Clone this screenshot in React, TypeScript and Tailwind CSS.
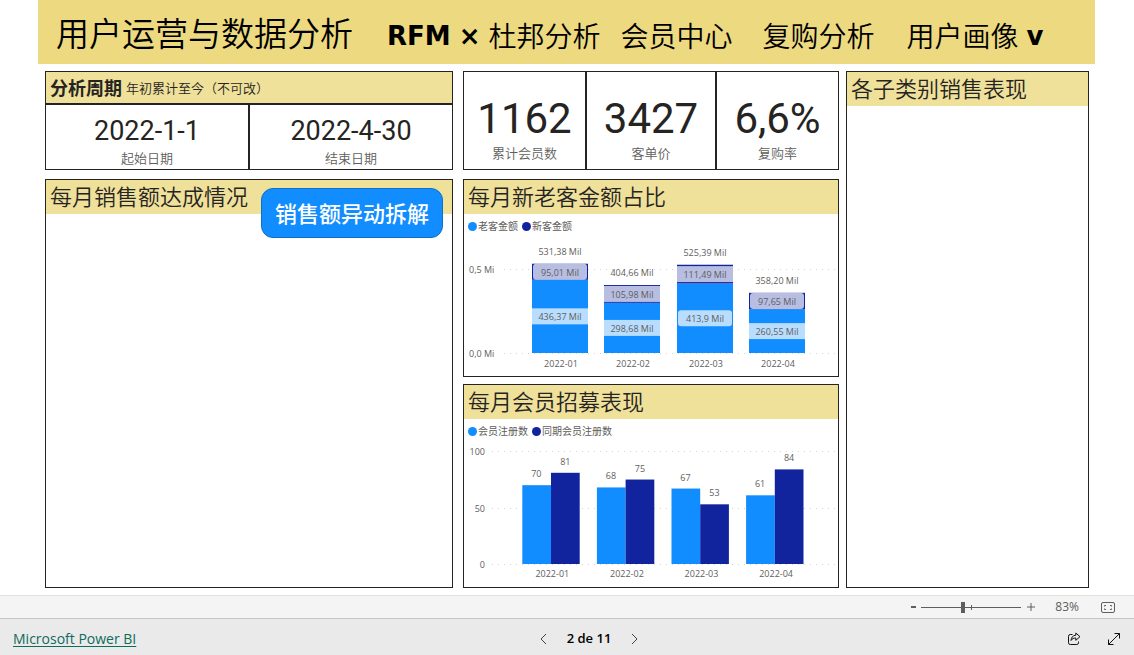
import type { ReactNode } from 'react'

/**
 * Embedded sales / membership report: a khaki banner with the page links,
 * three columns of cards, then the zoom strip and the pager bar.
 */

const BLUE = '#118dff'
const NAVY = '#12239e'

interface MonthSales {
  month: string
  old: number
  oldLabel: string
  fresh: number
  freshLabel: string
  total: string
}

const sales: MonthSales[] = [
  { month: '2022-01', old: 436.37, oldLabel: '436,37 Mil', fresh: 95.01, freshLabel: '95,01 Mil', total: '531,38 Mil' },
  { month: '2022-02', old: 298.68, oldLabel: '298,68 Mil', fresh: 105.98, freshLabel: '105,98 Mil', total: '404,66 Mil' },
  { month: '2022-03', old: 413.9, oldLabel: '413,9 Mil', fresh: 111.49, freshLabel: '111,49 Mil', total: '525,39 Mil' },
  { month: '2022-04', old: 260.55, oldLabel: '260,55 Mil', fresh: 97.65, freshLabel: '97,65 Mil', total: '358,20 Mil' },
]

const signups = [
  { month: '2022-01', current: 70, previous: 81 },
  { month: '2022-02', current: 68, previous: 75 },
  { month: '2022-03', current: 67, previous: 53 },
  { month: '2022-04', current: 61, previous: 84 },
]

const kpis = [
  { value: '1162', label: '累计会员数' },
  { value: '3427', label: '客单价' },
  { value: '6,6%', label: '复购率' },
]

function Panel({ title, className = '', children }: { title: string; className?: string; children?: ReactNode }) {
  return (
    <section className={`border border-[#252423] bg-white ${className}`}>
      <h2 className="h-[34px] bg-[#efe09a] pl-1 text-[22px] leading-8 font-[350] whitespace-nowrap">{title}</h2>
      {children}
    </section>
  )
}

function Legend({ items }: { items: [string, string] }) {
  return (
    <ul className="flex h-[23px] items-center gap-1 pt-0.5 pl-1 text-[10px] text-[#605e5c]">
      <li className="flex items-center gap-px">
        <span className="size-[9px] rounded-full bg-[#118dff]" />
        {items[0]}
      </li>
      <li className="flex items-center gap-px">
        <span className="size-[9px] rounded-full bg-[#12239e]" />
        {items[1]}
      </li>
    </ul>
  )
}

function GridLine({ x, y }: { x: number; y: number }) {
  return <line x1={x} x2={372} y1={y} y2={y} stroke="#d6d4d2" strokeDasharray="1 5" />
}

function BarLabel({ x, mid, text }: { x: number; mid: number; text: string }) {
  // short captions leave a sliver of the bar visible on each side
  const width = text.length < 10 ? 54 : 56
  return (
    <g>
      <rect x={x + (56 - width) / 2} y={mid - 8} width={width} height={16} rx={width < 56 ? 3 : 0} fill="#fff" fillOpacity={0.7} />
      <text x={x + 28} y={mid + 4} textAnchor="middle">{text}</text>
    </g>
  )
}

function SalesChart() {
  const base = 116
  const scale = 0.168
  return (
    <svg viewBox="0 0 374 139" className="block w-full" fontSize={9} fill="#605e5c">
      <text x={5} y={36}>0,5 Mi</text>
      <text x={5} y={120}>0,0 Mi</text>
      <GridLine x={40} y={32.5} />
      <GridLine x={40} y={116.5} />
      {sales.map((s, i) => {
        const x = Math.round(68 + i * 72.3)
        const split = base - s.old * scale
        const top = split - s.fresh * scale
        return (
          <g key={s.month}>
            <rect x={x} y={split} width={56} height={base - split} fill={BLUE} />
            <rect x={x} y={top} width={56} height={split - top} fill={NAVY} />
            <BarLabel x={x} mid={(base + split) / 2} text={s.oldLabel} />
            <BarLabel x={x} mid={(split + top) / 2} text={s.freshLabel} />
            <text x={x + 28} y={top - 9} textAnchor="middle">{s.total}</text>
            <text x={x + 29} y={130} textAnchor="middle">{s.month}</text>
          </g>
        )
      })}
    </svg>
  )
}

function SignupChart() {
  const base = 122
  const scale = 1.126
  return (
    <svg viewBox="0 0 374 145" className="block w-full" fontSize={9} fill="#605e5c">
      {[100, 50, 0].map((tick) => {
        const y = Math.round(base - tick * scale)
        return (
          <g key={tick}>
            <text x={21} y={y + 4} textAnchor="end">{tick}</text>
            <GridLine x={28} y={y + 0.5} />
          </g>
        )
      })}
      {signups.map((s, i) => {
        const x = 58.3 + i * 74.6
        const a = s.current * scale
        const b = s.previous * scale
        return (
          <g key={s.month}>
            <rect x={x} y={base - a} width={28.7} height={a} fill={BLUE} />
            <rect x={x + 28.7} y={base - b} width={28.7} height={b} fill={NAVY} />
            <text x={x + 14} y={base - a - 8} textAnchor="middle">{s.current}</text>
            <text x={x + 43} y={base - b - 8} textAnchor="middle">{s.previous}</text>
            <text x={x + 30} y={135} textAnchor="middle">{s.month}</text>
          </g>
        )
      })}
    </svg>
  )
}

function Banner() {
  return (
    <header className="flex h-16 items-center bg-[#ecd980] pt-1 pl-[18px] whitespace-nowrap text-black">
      <h1 className="text-[33px] leading-10 font-[350]">用户运营与数据分析</h1>
      <nav className="flex items-center pt-1 pl-[34px] text-[28px] leading-10 font-[350]">
        <a href="#rfm" className="flex items-center gap-2">
          <span className="flex gap-2 font-['DejaVu_Sans'] text-[26px] font-bold">
            <span>RFM</span>
            <span>×</span>
          </span>
          杜邦分析
        </a>
        <a href="#members" className="ml-5">会员中心</a>
        <a href="#repurchase" className="ml-[30px]">复购分析</a>
        <a href="#profile" className="ml-8 flex items-center gap-2">
          用户画像
          <span className="font-['DejaVu_Sans'] text-[26px] font-bold">v</span>
        </a>
      </nav>
    </header>
  )
}

function DateCell({ value, label }: { value: string; label: string }) {
  return (
    <div className="flex flex-1 flex-col items-center pt-2.5">
      <span className="font-[Roboto] text-[27px] leading-8">{value}</span>
      <span className="text-[13px] leading-[22px] font-[350] text-[#605e5c]">{label}</span>
    </div>
  )
}

function PeriodCard() {
  return (
    <section className="flex h-[99px] flex-col border border-[#252423]">
      <h2 className="flex h-[33px] items-center gap-1 border-b-2 border-[#252423] bg-[#efe09a] pt-0.5 pl-1 whitespace-nowrap">
        <span className="text-[18px] font-bold">分析周期</span>
        <span className="text-[13px] font-[350]">年初累计至今（不可改）</span>
      </h2>
      <div className="flex flex-1 divide-x-2 divide-[#252423]">
        <DateCell value="2022-1-1" label="起始日期" />
        <DateCell value="2022-4-30" label="结束日期" />
      </div>
    </section>
  )
}

function KpiRow() {
  return (
    <section className="grid h-[99px] grid-cols-[123fr_130fr_121fr] divide-x-2 divide-[#252423] border border-[#252423]">
      {kpis.map((k) => (
        <div key={k.label} className="flex flex-col items-center pt-6">
          <span className="font-[Roboto] text-[42px] leading-[46px]">{k.value}</span>
          <span className="text-[13px] leading-[22px] font-[350] text-[#605e5c]">{k.label}</span>
        </div>
      ))}
    </section>
  )
}

function ZoomStrip() {
  return (
    <div className="flex h-[23px] items-center justify-end border-t border-[#e1dfdd] bg-[#f4f4f4] pr-[18px] text-[#605e5c]">
      <button aria-label="Zoom out" className="mr-1 flex h-4 w-[6px] items-center">
        <span className="h-[2px] w-[5px] bg-[#605e5c]" />
      </button>
      <div className="relative flex items-center">
        <input
          type="range"
          aria-label="Zoom"
          min={0}
          max={100}
          defaultValue={41}
          className="h-3 w-[100px] appearance-none bg-transparent bg-[linear-gradient(#605e5c,#605e5c)] bg-[length:100%_1px] bg-center bg-no-repeat [&::-webkit-slider-thumb]:h-[11px] [&::-webkit-slider-thumb]:w-1 [&::-webkit-slider-thumb]:appearance-none [&::-webkit-slider-thumb]:bg-[#605e5c]"
        />
        <span className="pointer-events-none absolute left-1/2 h-[5px] w-px bg-[#605e5c]" />
      </div>
      <button aria-label="Zoom in" className="ml-1.5">
        <svg viewBox="0 0 8 8" className="size-2" stroke="currentColor">
          <path d="M0 4h8M4 0v8" />
        </svg>
      </button>
      <span className="ml-5 text-[12px]">83%</span>
      <button aria-label="Fit to page" className="ml-[22px]">
        <svg viewBox="0 0 15 11" className="h-[11px] w-[15px]" fill="none" stroke="currentColor">
          <rect x="0.5" y="0.5" width="13" height="10" rx="1.5" />
          <path d="M3.5 4.500V3.500H5M9 3.500h1.500v1M10.500 6.500v1H9M5 7.500H3.500v-1" />
        </svg>
      </button>
    </div>
  )
}

function PagerBar() {
  return (
    <footer className="grid h-[37px] grid-cols-[1fr_auto_1fr] items-center border-t border-[#c8c6c4] bg-[#eaeaea] px-[13px] pt-1">
      <a href="https://powerbi.microsoft.com" className="justify-self-start text-sm text-[#0f6b5c] underline underline-offset-2">
        Microsoft Power BI
      </a>
      <div className="flex items-center gap-5 pl-11">
        <button aria-label="Previous page">
          <svg viewBox="0 0 7 12" className="h-3 w-[7px]" fill="none" stroke="#444">
            <path d="M6 1 1 6l5 5" />
          </svg>
        </button>
        <span className="text-[13px] font-semibold text-black">2 de 11</span>
        <button aria-label="Next page">
          <svg viewBox="0 0 7 12" className="h-3 w-[7px]" fill="none" stroke="#444">
            <path d="m1 1 5 5-5 5" />
          </svg>
        </button>
      </div>
      <div className="flex items-center gap-[26px] justify-self-end">
        <button aria-label="Share">
          <svg viewBox="0 0 14 14" className="size-[14px]" fill="none" stroke="#111" strokeLinejoin="round">
            <path d="M5.5 2.500H3.300A1.800 1.800 0 0 0 1.500 4.300v6.400A1.800 1.800 0 0 0 3.300 12.500h6.400a1.800 1.800 0 0 0 1.800-1.800V9.500" />
            <path d="M8.800 1v2.200C5.800 3.400 4.300 5.400 4 8.500c1.200-1.800 2.600-2.500 4.800-2.500v2.300L13 4.700z" />
          </svg>
        </button>
        <button aria-label="Full screen">
          <svg viewBox="0 0 14 14" className="size-[14px]" fill="none" stroke="#111">
            <path d="M1.500 12.500l11-11M7.500 1.500h5v5M1.500 7.500v5h5" />
          </svg>
        </button>
      </div>
    </footer>
  )
}

export default function App() {
  return (
    <div className="flex min-h-screen flex-col bg-white font-['Open_Sans','Noto_Sans_CJK_SC',sans-serif] text-[#252423]">
      <div className="flex flex-1 flex-col pr-[39px] pl-[38px]">
        <Banner />
        <main className="grid flex-1 grid-cols-[794fr_243fr] gap-[7px] pt-[7px] pr-1.5 pb-[7px] pl-[7px]">
          <div className="grid grid-cols-[408fr_376fr] gap-2.5">
            <div className="flex flex-col gap-[9px]">
              <PeriodCard />
              <Panel title="每月销售额达成情况" className="relative flex-1">
                <button className="absolute top-2 right-[9px] h-[50px] rounded-xl border border-[#0f6fc9] bg-[#118dff] px-[13px] text-[22px] font-medium text-white">
                  销售额异动拆解
                </button>
              </Panel>
            </div>
            <div className="flex flex-col">
              <KpiRow />
              <Panel title="每月新老客金额占比" className="mt-[9px]">
                <Legend items={['老客金额', '新客金额']} />
                <SalesChart />
              </Panel>
              <Panel title="每月会员招募表现" className="mt-[7px] flex-1">
                <Legend items={['会员注册数', '同期会员注册数']} />
                <SignupChart />
              </Panel>
            </div>
          </div>
          <Panel title="各子类别销售表现" />
        </main>
      </div>
      <ZoomStrip />
      <PagerBar />
    </div>
  )
}
